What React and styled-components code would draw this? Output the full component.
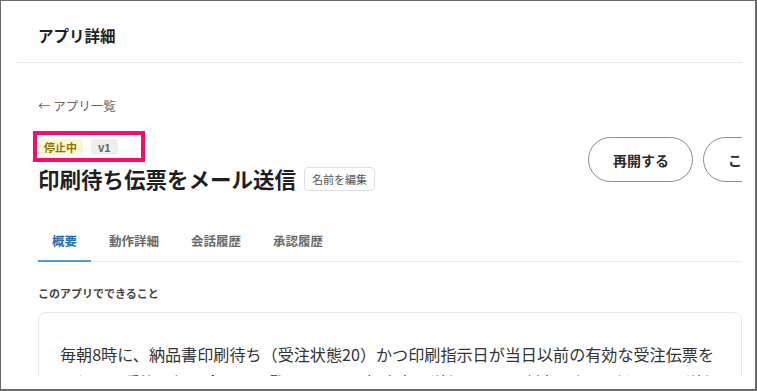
import React from 'react';
import styled, { createGlobalStyle } from 'styled-components';

const GlobalStyle = createGlobalStyle`
    html, body {
        margin: 0;
        padding: 0;
        background: #ffffff;
    }
    body {
        font-family: "Noto Sans CJK JP", "Noto Sans", sans-serif;
        color: #222;
    }
`;

const tabs = ['概要', '動作詳細', '会話履歴', '承認履歴'];

const App = () => {
    return (
        <>
            <GlobalStyle />
            <Frame>
                <Viewport>
                    <Header>アプリ詳細</Header>
                    <Main>
                        <BackLink>← アプリ一覧</BackLink>
                        <TitleRow>
                            <TitleColumn>
                                <BadgeRow>
                                    <Badge tone="warn">停止中</Badge>
                                    <Badge>v1</Badge>
                                    <Highlight />
                                </BadgeRow>
                                <TitleLine>
                                    <Title>印刷待ち伝票をメール送信</Title>
                                    <SmallButton>名前を編集</SmallButton>
                                </TitleLine>
                            </TitleColumn>
                            <Actions>
                                <PillButton>再開する</PillButton>
                                <PillButton>このアプリを削除</PillButton>
                            </Actions>
                        </TitleRow>

                        <TabBar>
                            {tabs.map((t, i) => (
                                <Tab key={t} active={i === 0}>{t}</Tab>
                            ))}
                        </TabBar>

                        <SectionLabel>このアプリでできること</SectionLabel>
                        <Card>
                            毎朝8時に、納品書印刷待ち（受注状態20）かつ印刷指示日が当日以前の有効な受注伝票を取得し、受注明細を含めた一覧をメールで担当者に送信します。対象の伝票がない日は送信しません。
                        </Card>
                    </Main>
                </Viewport>
            </Frame>
        </>
    );
};

const Frame = styled.div`
    width: 757px;
    height: 391px;
    box-sizing: border-box;
    border-style: solid;
    border-color: #6a6a6a;
    border-width: 1px 2px 2px 1px;
    padding: 0 13px 13px 0;
    display: flex;
    background: #fff;
`;

const Viewport = styled.div`
    flex: 1;
    min-width: 0;
    overflow: hidden;
    display: flex;
    flex-direction: column;
`;

const Header = styled.div`
    height: 62px;
    box-sizing: border-box;
    margin-left: 16px;
    padding: 23px 0 0 21px;
    line-height: 22px;
    font-size: 15.5px;
    font-weight: 700;
    color: #1f1f1f;
    border-bottom: 1px solid #e4e9ef;
    flex-shrink: 0;
`;

const Main = styled.div`
    padding-left: 37px;
    display: flex;
    flex-direction: column;
`;

const BackLink = styled.div`
    margin-top: 33px;
    font-size: 12.5px;
    line-height: 20px;
    color: #666;
`;

const TitleRow = styled.div`
    margin-top: 21px;
    display: flex;
    align-items: flex-start;
`;

const TitleColumn = styled.div`
    flex: 1;
    min-width: 0;
    padding-top: 2px;
`;

const BadgeRow = styled.div`
    position: relative;
    display: flex;
    gap: 8px;
`;

const Badge = styled.span`
    height: 16px;
    line-height: 16px;
    padding: 0 ${({ tone }) => (tone === 'warn' ? '6px' : '7px')};
    border-radius: 3px;
    font-size: 11px;
    font-weight: 700;
    background: ${({ tone }) => (tone === 'warn' ? '#fdf6d4' : '#eeeeee')};
    color: ${({ tone }) => (tone === 'warn' ? '#8a7800' : '#666')};
`;

const Highlight = styled.div`
    position: absolute;
    left: -5px;
    top: -8px;
    width: 112px;
    height: 31px;
    box-sizing: border-box;
    border: 4px solid #fb0a6d;
    pointer-events: none;
`;

const TitleLine = styled.div`
    margin-top: 9px;
    display: flex;
    align-items: center;
    gap: 8px;
`;

const Title = styled.h1`
    margin: 0;
    font-size: 21.5px;
    line-height: 30px;
    font-weight: 700;
    color: #1f1f1f;
`;

const SmallButton = styled.button`
    height: 24px;
    padding: 0 7px;
    border: 1px solid #dcdfe3;
    border-radius: 4px;
    background: #fff;
    font-family: inherit;
    font-size: 11px;
    color: #555;
`;

const Actions = styled.div`
    width: 154px;
    flex-shrink: 0;
    display: flex;
    gap: 10px;
    white-space: nowrap;
`;

const PillButton = styled.button`
    flex-shrink: 0;
    height: 45px;
    padding: 0 23px 0 24px;
    border: 1.5px solid #8c8c8c;
    border-radius: 23px;
    background: #fff;
    font-family: inherit;
    font-size: 14px;
    font-weight: 700;
    color: #2a2a2a;
`;

const TabBar = styled.div`
    margin-top: 37px;
    display: flex;
    gap: 4px;
    border-bottom: 1px solid #e6ebf1;
`;

const Tab = styled.div`
    padding: 0 14px 9px;
    margin-bottom: -1px;
    font-size: 12.5px;
    line-height: 20px;
    font-weight: 700;
    color: ${({ active }) => (active ? '#1d6cab' : '#6a6a6a')};
    border-bottom: 2px solid ${({ active }) => (active ? '#4d9ad6' : 'transparent')};
`;

const SectionLabel = styled.div`
    margin-top: 23px;
    font-size: 11px;
    line-height: 16px;
    font-weight: 700;
    color: #444;
`;

const Card = styled.div`
    margin-top: 11px;
    padding: 27px 22px 27px 21px;
    border: 1px solid #e3e8ee;
    border-radius: 8px;
    font-size: 16.1px;
    line-height: 28px;
    color: #333;
`;

export default App;
